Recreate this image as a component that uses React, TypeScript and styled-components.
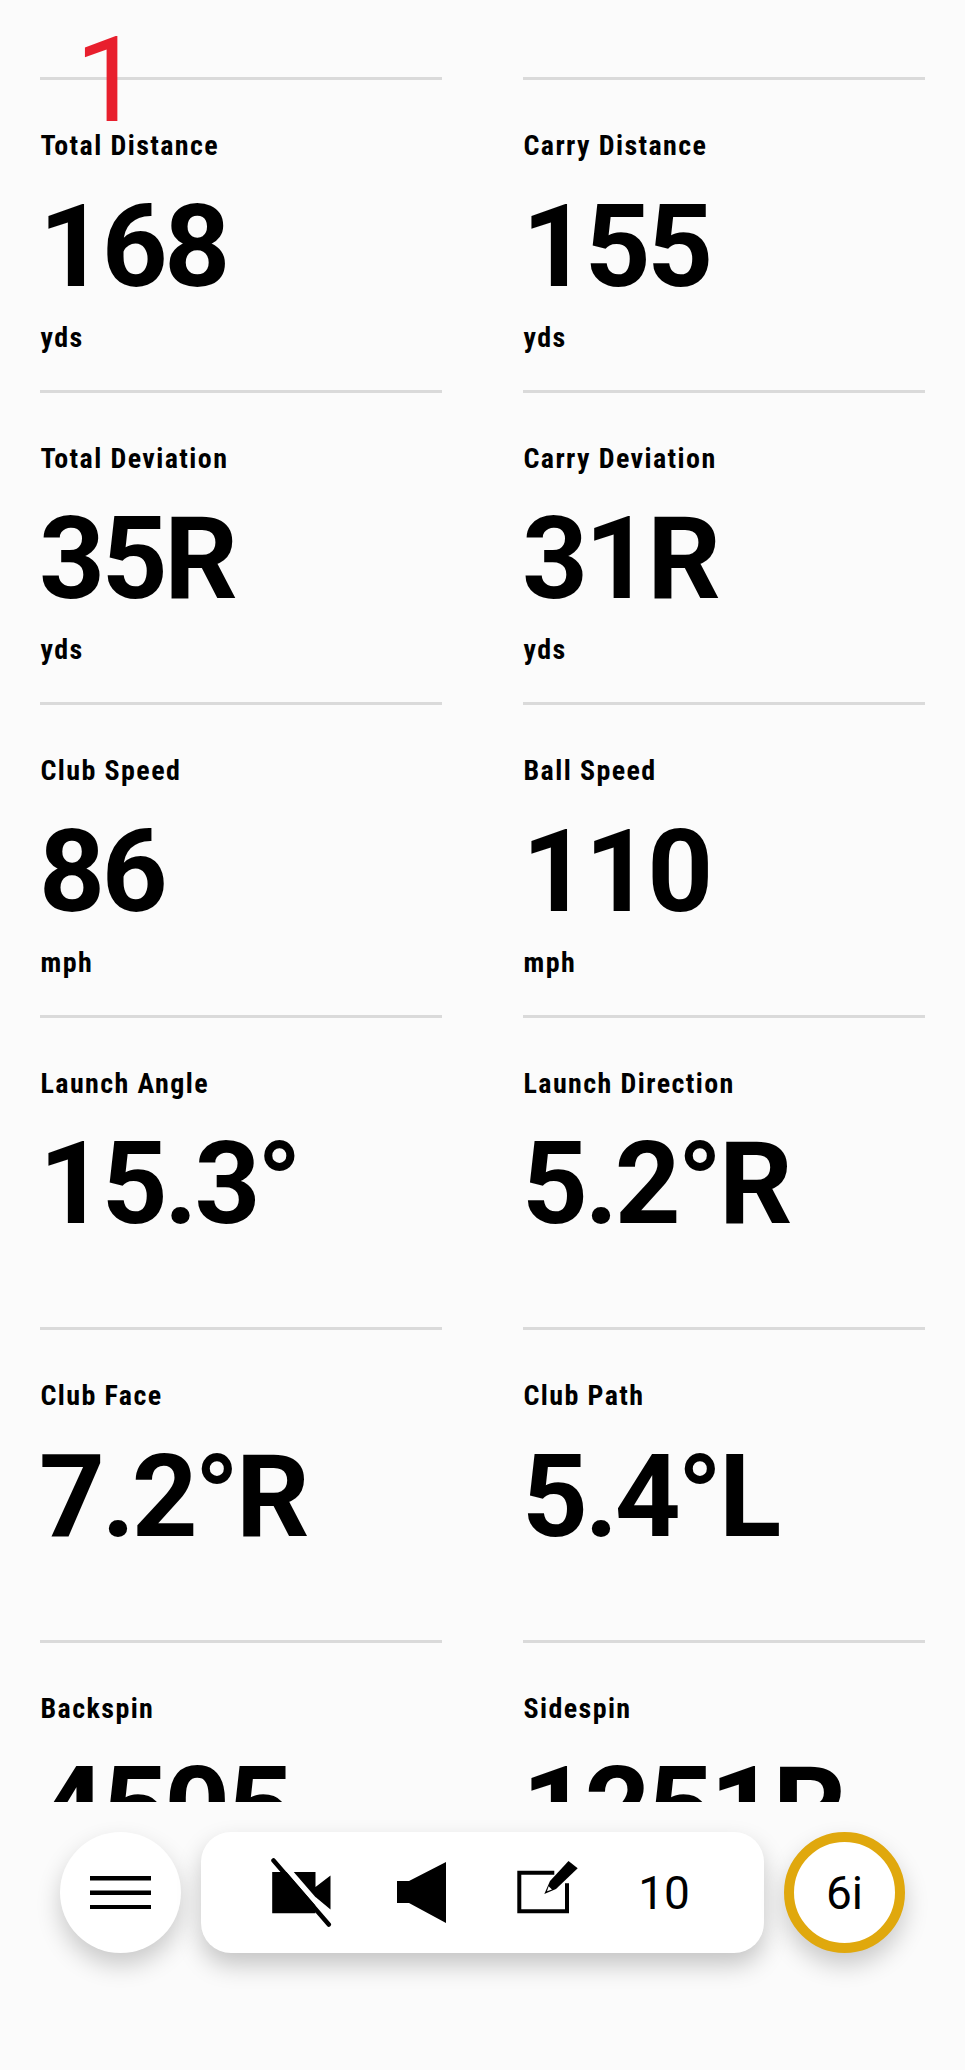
import React from "react";
import styled, { createGlobalStyle } from "styled-components";

const GlobalStyle = createGlobalStyle`
  html, body {
    margin: 0;
    padding: 0;
    background: #fbfbfb;
  }
  * {
    box-sizing: border-box;
  }
`;

const Page = styled.div`
  position: relative;
  width: 965px;
  height: 2070px;
  overflow: hidden;
  background: #fbfbfb;
  font-family: Roboto, "Liberation Sans", sans-serif;
  color: #000;
`;

const ShotNumber = styled.div`
  position: absolute;
  left: 75px;
  top: 11px;
  font-size: 119px;
  line-height: 139px;
  font-weight: 400;
  color: #e81f2d;
`;

const Metrics = styled.div`
  height: 1802px;
  overflow: hidden;
  padding: 77px 40px 0;
  display: grid;
  grid-template-columns: 402px 402px;
  column-gap: 81px;
  grid-auto-rows: 312.6px;
`;

const Cell = styled.div`
  border-top: 3px solid #dadada;
  display: flex;
  flex-direction: column;
`;

const Label = styled.div`
  margin-top: 48px;
  margin-left: 0.5px;
  height: 36px;
  font-size: 28px;
  line-height: 36px;
  font-weight: 700;
  font-stretch: 75%;
  letter-spacing: 1.4px;
  white-space: nowrap;
`;

const Value = styled.div`
  margin-top: 14.5px;
  margin-left: -1px;
  height: 135px;
  font-size: 115px;
  line-height: 135px;
  font-weight: 700;
  letter-spacing: -3.3px;
  white-space: nowrap;
`;

const Unit = styled.div`
  margin-top: 6px;
  margin-left: 0.5px;
  font-size: 28px;
  line-height: 36px;
  font-weight: 700;
  font-stretch: 75%;
  letter-spacing: 1.4px;
`;

const Toolbar = styled.div`
  padding: 30px 60px 0;
  display: flex;
  gap: 20px;
`;

const RoundButton = styled.div<{ $ring?: boolean }>`
  width: 121px;
  height: 121px;
  border-radius: 50%;
  background: #fff;
  border: ${(p) => (p.$ring ? "10px solid #e0a80d" : "none")};
  box-shadow: 0 12px 24px rgba(0, 0, 0, 0.2);
  display: flex;
  align-items: center;
  justify-content: center;
`;

const Pill = styled.div`
  width: 563px;
  height: 121px;
  border-radius: 30px;
  background: #fff;
  box-shadow: 0 12px 24px rgba(0, 0, 0, 0.22);
  display: flex;
  align-items: center;
  justify-content: center;
`;

const PillItem = styled.div`
  width: 121px;
  display: flex;
  align-items: center;
  justify-content: center;
`;

const CountText = styled.span`
  font-size: 46px;
  line-height: 56px;
  font-weight: 400;
`;

const MenuIcon = () => (
  <svg width="61" height="33" viewBox="0 0 61 33">
    <path d="M0 0h61v4.5H0zM0 14.5h61V19H0zM0 29h61v4.5H0z" fill="#000" />
  </svg>
);

// White cut only runs along the upper right side of the slash
const CameraOffIcon = () => (
  <svg width="62" height="70" viewBox="0 0 62 70">
    <path d="M2.2 14h43.3v41.2H2.2zM45.5 29l15-11.5v34L45.5 39z" fill="#000" />
    <path d="M7.3-.8l55.3 64" stroke="#fff" strokeWidth="5.5" fill="none" />
    <path d="M3.5 2.5l55.3 64" stroke="#000" strokeWidth="4.5" strokeLinecap="round" fill="none" />
  </svg>
);

const SpeakerIcon = () => (
  <svg width="50" height="61" viewBox="0 0 50 61">
    <path d="M0 19h12L49 0v61L12 41H0z" fill="#000" />
  </svg>
);

// Canvas is wider and taller than the box so the box sits off centre like the original
const EditIcon = () => (
  <svg width="69" height="63" viewBox="0 0 69 63">
    <path d="M45.3 11.7h-35v38.6H58V22.3" stroke="#000" strokeWidth="4" fill="none" />
    <path d="M35.3 33L41 20 59.5 0l9.2 7.3L47 28z" fill="#000" />
    <path d="M38 30.2l1.6-5 3.4 3.4z" fill="#fff" />
  </svg>
);

const rows = [
  [
    { label: "Total Distance", value: "168", unit: "yds" },
    { label: "Carry Distance", value: "155", unit: "yds" },
  ],
  [
    { label: "Total Deviation", value: "35R", unit: "yds" },
    { label: "Carry Deviation", value: "31R", unit: "yds" },
  ],
  [
    { label: "Club Speed", value: "86", unit: "mph" },
    { label: "Ball Speed", value: "110", unit: "mph" },
  ],
  [
    { label: "Launch Angle", value: "15.3°" },
    { label: "Launch Direction", value: "5.2°R" },
  ],
  [
    { label: "Club Face", value: "7.2°R" },
    { label: "Club Path", value: "5.4°L" },
  ],
  [
    { label: "Backspin", value: "4505" },
    { label: "Sidespin", value: "1251R" },
  ],
];

const App = () => (
  <Page>
    <GlobalStyle />
    <ShotNumber>1</ShotNumber>
    <Metrics>
      {rows.flat().map((m) => (
        <Cell key={m.label}>
          <Label>{m.label}</Label>
          <Value>{m.value}</Value>
          {m.unit && <Unit>{m.unit}</Unit>}
        </Cell>
      ))}
    </Metrics>
    <Toolbar>
      <RoundButton>
        <MenuIcon />
      </RoundButton>
      <Pill>
        <PillItem>
          <CameraOffIcon />
        </PillItem>
        <PillItem>
          <SpeakerIcon />
        </PillItem>
        <PillItem>
          <EditIcon />
        </PillItem>
        <PillItem>
          <CountText>10</CountText>
        </PillItem>
      </Pill>
      <RoundButton $ring>
        <CountText>6i</CountText>
      </RoundButton>
    </Toolbar>
  </Page>
);

export default App;
